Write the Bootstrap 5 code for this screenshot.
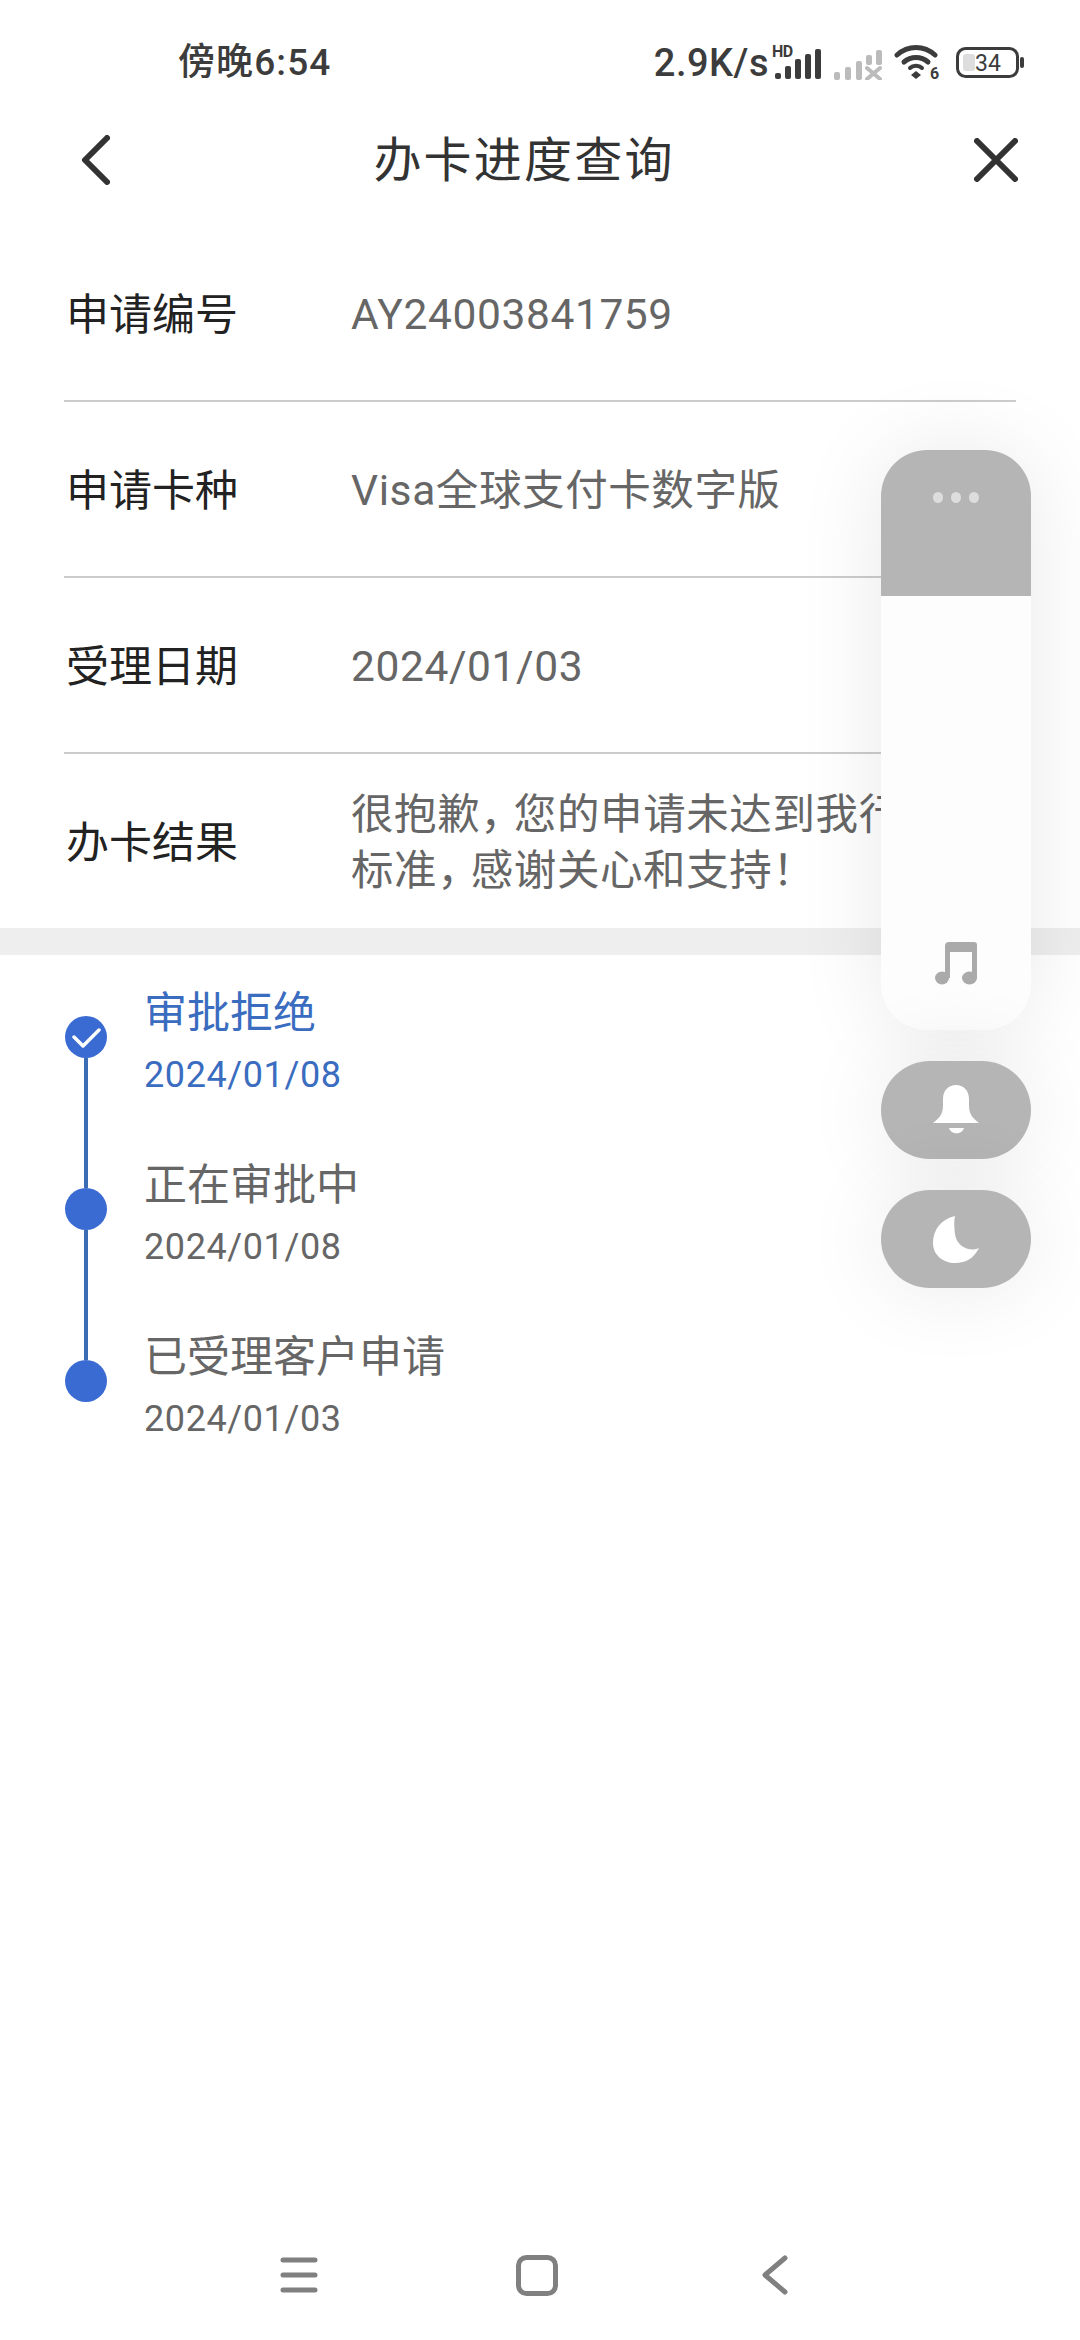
<!DOCTYPE html>
<html lang="zh">
<head>
  <meta charset="UTF-8" />
  <meta name="viewport" content="width=device-width, initial-scale=1.0" />
  <title>办卡进度查询</title>
  <link href="https://cdn.jsdelivr.net/npm/bootstrap@5.3.3/dist/css/bootstrap.min.css" rel="stylesheet">
  <style>
    body { font-family: Roboto, "Noto Sans CJK SC", sans-serif; background: #fff; }
    .page-wrap { width: 1080px; min-height: 2340px; overflow: hidden; }

    /* 状态栏 */
    .status-line { height: 100px; padding: 24px 56px 0 178px; color: #3c3c3c; }
    .status-time { font-size: 37px; line-height: 76px; letter-spacing: 1.1px; font-weight: 500; padding-top: 2px; }
    .status-speed { font-size: 38px; line-height: 76px; margin-right: 5px; letter-spacing: .5px; font-weight: 500; padding-top: 2px; }
    .hd-wrap { position: relative; width: 48px; height: 31px; margin-right: 12px; margin-top: 2px; }
    .hd-text { position: absolute; left: -2px; top: -3px; font-size: 16px; font-weight: 700; line-height: 14px; letter-spacing: -.5px; }
    .wifi-icon { margin: 2px 14px 0 12px; }

    /* 标题栏 */
    .top-title { height: 120px; margin-bottom: 6px; padding: 0 62px 0 81px; }
    .top-title h1 { font-size: 48px; font-weight: 400; color: #333; margin: 2px 36px 0 0; letter-spacing: 2.2px; }

    /* 信息行 */
    .info-list { padding: 0 64px; }
    .info-row { height: 176px; border-bottom: 2px solid #ccc; padding-top: 4px; }
    .info-row:last-child { height: 174px; border-bottom: 0; }
    .info-label { width: 287px; flex: none; padding-left: 2px; font-size: 43px; color: #222; }
    .info-value { font-size: 42.5px; line-height: 56px; color: #666; letter-spacing: .6px; white-space: nowrap; }
    .comma-tight { letter-spacing: -9px; }
    .gap-band { height: 27px; background: #eee; }

    /* 审批进度 */
    .step-list { padding: 30px 0 0 65px; }
    .step-item { height: 172px; }
    .step-mark { width: 42px; height: 172px; margin: 31px 38px 0 0; flex: none; }
    .step-dot { width: 42px; height: 42px; border-radius: 50%; background: #3a6bd2; flex: none; }
    .step-line { width: 4px; flex-grow: 1; background: #3c6db4; }
    .step-title { font-size: 43px; line-height: 56px; color: #666; margin-left: -1px; }
    .step-date { font-size: 36px; line-height: 48px; margin-top: 10px; color: #666; letter-spacing: .6px; margin-left: -1px; }
    .step-item.is-current .step-title, .step-item.is-current .step-date { color: #3a6cc0; }

    /* 悬浮面板 */
    .float-bar { position: absolute; left: 881px; top: 450px; width: 150px; gap: 31px; }
    .float-main { height: 580px; border-radius: 46px; overflow: hidden; background: #fdfdfd; box-shadow: 0 0 90px rgba(0,0,0,.09); }
    .float-head { height: 146px; background: #b5b5b5; padding-top: 42px; gap: 8px; }
    .float-head span { width: 10px; height: 11px; border-radius: 50%; background: #ddd; }
    .float-body { padding-bottom: 45px; }
    .float-btn { height: 98px; border-radius: 49px; background: #b5b5b5; box-shadow: 0 0 90px rgba(0,0,0,.09); }

    /* 底部导航 */
    .bottom-keys { height: 130px; padding-right: 6px; }
    .bottom-keys div { width: 238px; }
  </style>
</head>
<body>
  <div class="page-wrap position-relative d-flex flex-column">

    <!-- 状态栏 -->
    <div class="status-line d-flex justify-content-between align-items-center">
      <span class="status-time">傍晚6:54</span>
      <div class="d-flex align-items-center">
        <span class="status-speed">2.9K/s</span>
        <div class="hd-wrap">
          <span class="hd-text">HD</span>
          <svg width="48" height="31" viewBox="0 0 48 31" fill="#3c3c3c">
            <rect x="1" y="25" width="6" height="6" rx="2"/>
            <rect x="11" y="18" width="6" height="13" rx="2"/>
            <rect x="21" y="11" width="6" height="20" rx="2"/>
            <rect x="31" y="6" width="6" height="25" rx="2"/>
            <rect x="41" y="1" width="6" height="30" rx="2"/>
          </svg>
        </div>
        <svg width="48" height="31" viewBox="0 0 48 31" class="mt-1">
          <g fill="#bbb">
            <rect x="0" y="23" width="6" height="8" rx="2"/>
            <rect x="11" y="18" width="6" height="13" rx="2"/>
            <rect x="22" y="12" width="6" height="19" rx="2"/>
            <rect x="32" y="6" width="6" height="10" rx="2"/>
            <rect x="42" y="1" width="6" height="15" rx="2"/>
          </g>
          <path d="M33 19 L46 30 M46 19 L33 30" stroke="#bbb" stroke-width="4" stroke-linecap="round"/>
        </svg>
        <svg class="wifi-icon" width="48" height="38" viewBox="0 0 48 38">
          <g fill="none" stroke="#3c3c3c" stroke-width="5" stroke-linecap="round">
            <path d="M3 11 C14 1 30 1 41 11"/>
            <path d="M10 18 C17 12 27 12 34 18"/>
          </g>
          <path d="M16 24 C19 21 25 21 28 24" fill="none" stroke="#3c3c3c" stroke-width="4" stroke-linecap="round"/>
          <path d="M22 27 L27 31 L22 35 L17 31 Z" fill="#3c3c3c"/>
          <text x="36" y="35" font-size="16" font-weight="700" fill="#3c3c3c" font-family="Roboto">6</text>
        </svg>
        <svg width="68" height="31" viewBox="0 0 68 31" style="margin-top:1px">
          <rect x="1.5" y="1.5" width="60" height="28" rx="8" fill="none" stroke="#3c3c3c" stroke-width="3"/>
          <rect x="7" y="7" width="12" height="17" rx="3" fill="#ddd"/>
          <rect x="64" y="10" width="4" height="11" rx="2" fill="#3c3c3c"/>
          <text x="32" y="24" font-size="23" text-anchor="middle" fill="#3c3c3c" font-family="Roboto">34</text>
        </svg>
      </div>
    </div>

    <!-- 标题栏 -->
    <div class="top-title d-flex justify-content-between align-items-center">
      <svg width="29" height="50" viewBox="0 0 29 50" fill="none" stroke="#333" stroke-width="6" stroke-linecap="round" stroke-linejoin="round">
        <path d="M26 3 L4 25 L26 47"/>
      </svg>
      <h1>办卡进度查询</h1>
      <svg width="44" height="44" viewBox="0 0 44 44" fill="none" stroke="#333" stroke-width="6" stroke-linecap="round">
        <path d="M3 3 L41 41 M41 3 L3 41"/>
      </svg>
    </div>

    <!-- 申请信息 -->
    <div class="info-list">
      <div class="info-row d-flex align-items-center">
        <div class="info-label">申请编号</div>
        <div class="info-value">AY24003841759</div>
      </div>
      <div class="info-row d-flex align-items-center">
        <div class="info-label">申请卡种</div>
        <div class="info-value">Visa全球支付卡数字版</div>
      </div>
      <div class="info-row d-flex align-items-center">
        <div class="info-label">受理日期</div>
        <div class="info-value">2024/01/03</div>
      </div>
      <div class="info-row d-flex align-items-center">
        <div class="info-label">办卡结果</div>
        <div class="info-value">很抱歉<span class="comma-tight">，</span>您的申请未达到我行<br>标准<span class="comma-tight">，</span>感谢关心和支持！</div>
      </div>
    </div>
    <div class="gap-band"></div>

    <!-- 审批进度 -->
    <div class="step-list">
      <div class="step-item is-current d-flex">
        <div class="step-mark d-flex flex-column align-items-center">
          <div class="step-dot d-flex align-items-center justify-content-center">
            <svg width="29" height="21" viewBox="0 0 29 21" fill="none" stroke="#fff" stroke-width="3.5" stroke-linecap="round" stroke-linejoin="round">
              <path d="M2 10 L11 19 L27 3"/>
            </svg>
          </div>
          <div class="step-line"></div>
        </div>
        <div>
          <div class="step-title">审批拒绝</div>
          <div class="step-date">2024/01/08</div>
        </div>
      </div>
      <div class="step-item d-flex">
        <div class="step-mark d-flex flex-column align-items-center">
          <div class="step-dot"></div>
          <div class="step-line"></div>
        </div>
        <div>
          <div class="step-title">正在审批中</div>
          <div class="step-date">2024/01/08</div>
        </div>
      </div>
      <div class="step-item d-flex">
        <div class="step-mark d-flex flex-column align-items-center">
          <div class="step-dot"></div>
        </div>
        <div>
          <div class="step-title">已受理客户申请</div>
          <div class="step-date">2024/01/03</div>
        </div>
      </div>
    </div>

    <!-- 悬浮面板 -->
    <div class="float-bar d-flex flex-column">
      <div class="float-main d-flex flex-column">
        <div class="float-head d-flex justify-content-center align-items-start">
          <span></span><span></span><span></span>
        </div>
        <div class="float-body flex-grow-1 d-flex justify-content-center align-items-end">
          <svg width="42" height="43" viewBox="0 0 42 43" fill="#aaa">
            <ellipse cx="7" cy="36" rx="7" ry="6.5"/>
            <ellipse cx="34.5" cy="36" rx="7.5" ry="6.5"/>
            <path d="M10 36 V4 Q10 0 14 0 H39 Q42 0 42 3 V36 H37 V10 H15 V36 Z"/>
          </svg>
        </div>
      </div>
      <div class="float-btn d-flex align-items-center justify-content-center">
        <svg width="46" height="50" viewBox="0 0 46 50" fill="#fff">
          <path d="M0 38 C6 33 10 30 10 20 V14 C10 5 16 0 23 0 C30 0 36 5 36 14 V20 C36 30 40 33 46 38 Z"/>
          <path d="M16 43 H31 C29 50 18 50 16 43 Z"/>
        </svg>
      </div>
      <div class="float-btn d-flex align-items-center justify-content-center">
        <svg width="46" height="47" viewBox="0 0 46 47" fill="#fff">
          <path d="M22 0 C8 3 0 14 0 27 C0 39 10 47 22 47 C33 47 41 42 46 32 C38 36 24 32 22 18 C21 10 21 5 22 0 Z"/>
        </svg>
      </div>
    </div>

    <!-- 底部导航键 -->
    <div class="bottom-keys mt-auto d-flex justify-content-center align-items-center">
      <div class="d-flex justify-content-center">
        <svg width="38" height="36" viewBox="0 0 38 36" fill="none" stroke="#808080" stroke-width="5" stroke-linecap="round">
          <path d="M3 3 H35 M3 18 H35 M3 33 H35"/>
        </svg>
      </div>
      <div class="d-flex justify-content-center">
        <svg width="42" height="41" viewBox="0 0 42 41" fill="none" stroke="#808080" stroke-width="5">
          <rect x="2.5" y="2.5" width="37" height="36" rx="8"/>
        </svg>
      </div>
      <div class="d-flex justify-content-center">
        <svg width="26" height="40" viewBox="0 0 26 40" fill="none" stroke="#808080" stroke-width="5" stroke-linecap="round" stroke-linejoin="round">
          <path d="M23 3 L3 20 L23 37"/>
        </svg>
      </div>
    </div>
  </div>

  <script src="https://cdn.jsdelivr.net/npm/bootstrap@5.3.3/dist/js/bootstrap.bundle.min.js"></script>
</body>
</html>
